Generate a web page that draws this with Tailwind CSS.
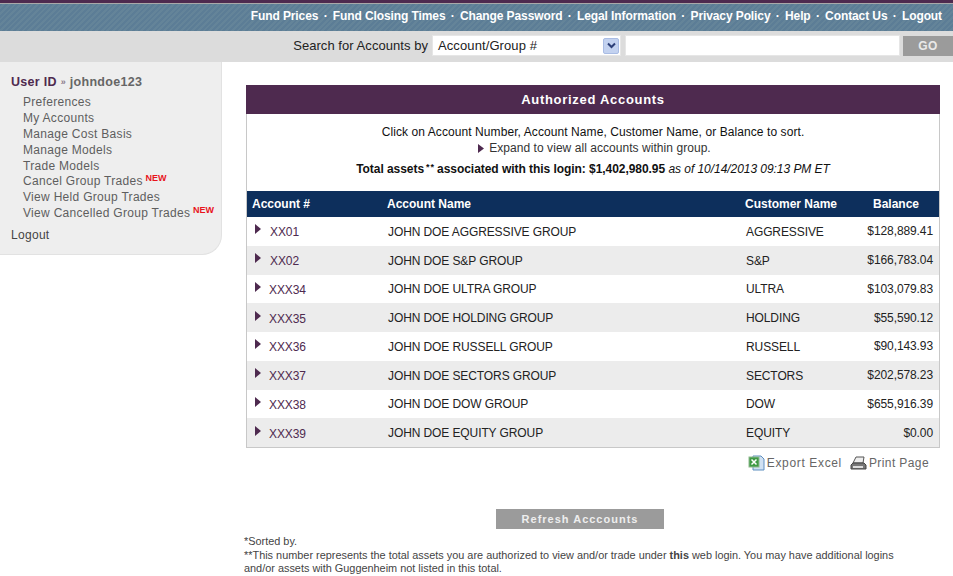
<!DOCTYPE html>
<html lang="en">
  <head>
    <meta charset="UTF-8" />
    <title>Authorized Accounts</title>
    <script src="https://cdn.jsdelivr.net/npm/@tailwindcss/browser@4"></script>
    <meta name="viewport" content="width=device-width, initial-scale=1.0" />
  </head>
  <body class="bg-white h-[576px] overflow-hidden font-['Liberation_Sans',Arial,sans-serif] text-[12px] text-[#222]">
    <!-- top nav -->
    <div class="h-[3px] bg-[#4e2a4f]"></div>
    <div class="h-[28px] pb-[3px] border-t border-[#a9a9a9] bg-[repeating-linear-gradient(135deg,#5c7d96_0,#5c7d96_2px,#648499_2px,#648499_4px)] flex items-center justify-end pr-[11px] font-bold text-white tracking-[-0.1px] gap-[5.3px]">
      <a>Fund Prices</a><span>·</span>
      <a>Fund Closing Times</a><span>·</span>
      <a>Change Password</a><span>·</span>
      <a>Legal Information</a><span>·</span>
      <a>Privacy Policy</a><span>·</span>
      <a>Help</a><span>·</span>
      <a>Contact Us</a><span>·</span>
      <a>Logout</a>
    </div>

    <!-- search bar -->
    <div class="h-[31px] pb-[2px] bg-[#dcdcdc] flex items-center justify-end text-[13px]">
      <span class="mr-[4px] tracking-[0.05px]">Search for Accounts by</span>
      <div class="w-[189px] h-[21px] bg-white flex items-center justify-between pl-[5px] pr-[1px] mr-[4px] border border-[#e6e6e6]">
        <span class="tracking-[0.1px]">Account/Group #</span>
        <span class="w-[16px] h-[16px] bg-[#c3d2f0] border border-[#a9bce4] rounded-[2px] flex items-center justify-center">
          <svg width="9" height="7" viewBox="0 0 9 7"><path d="M1 1.5 L4.5 5 L8 1.5" fill="none" stroke="#2c3f78" stroke-width="2"/></svg>
        </span>
      </div>
      <div class="w-[275px] h-[21px] bg-white border border-[#e6e6e6] mr-[3px]"></div>
      <div class="w-[50px] h-[20px] bg-[#9b9b9b] text-[#e9e9e9] font-bold text-[12px] tracking-[0.5px] flex items-center justify-center">GO</div>
    </div>

    <div class="flex items-start">
      <!-- sidebar -->
      <div class="w-[222px] h-[193px] shrink-0 bg-[#eeeeee] rounded-br-[20px] border-r border-b border-[#e2e2e2] pt-[12px] pl-[11px] text-[#5e5e5e] tracking-[0.3px]">
        <div class="font-bold text-[12.5px] leading-[16px] mb-[4px]"><span class="text-[#4e2a4f]">User ID</span> <span class="text-[9px] text-[#8a7a8a] align-[1px]">»</span> <span class="text-[#666]">johndoe123</span></div>
        <ul class="pl-[12px] leading-[16px]">
          <li>Preferences</li>
          <li>My Accounts</li>
          <li>Manage Cost Basis</li>
          <li>Manage Models</li>
          <li>Trade Models</li>
          <li class="whitespace-nowrap -mt-[1px]">Cancel Group Trades <span class="text-[9px] leading-[0] font-bold text-[#e8141c] align-[4px] tracking-normal -ml-[1px]">NEW</span></li>
          <li>View Held Group Trades</li>
          <li class="whitespace-nowrap">View Cancelled Group Trades <span class="text-[9px] leading-[0] font-bold text-[#e8141c] align-[4px] tracking-normal -ml-[1px]">NEW</span></li>
        </ul>
        <div class="mt-[6px] leading-[16px] text-[#444]">Logout</div>
      </div>

      <!-- main -->
      <div class="w-[731px] pl-[24px] pr-[13px] pt-[23px]">
        <div class="h-[29px] pt-[1px] bg-[#4e2a4f] text-white font-bold text-[13px] tracking-[0.7px] flex items-center justify-center">Authorized Accounts</div>
        <div class="border-x border-b border-[#c8c8c8]">
          <div class="h-[77px] pt-[10px] text-center text-[#111]">
            <p class="leading-[17px] tracking-[0.08px]">Click on Account Number, Account Name, Customer Name, or Balance to sort.</p>
            <p class="leading-[15px] flex items-center justify-center gap-[5px] text-[#333] tracking-[0.05px] pl-[3px]">
              <svg width="6" height="9" viewBox="0 0 6 9"><path d="M0 0 L6 4.5 L0 9 Z" fill="#4e2a4f"/></svg>
              Expand to view all accounts within group.
            </p>
            <p class="leading-[18px] mt-[4px] tracking-[-0.05px]"><b>Total assets<span class="text-[9px] leading-[0] align-[3px] tracking-[1px] mx-[2px]">**</span>associated with this login: $1,402,980.95</b> <i>as of 10/14/2013 09:13 PM ET</i></p>
          </div>
          <table class="w-full table-fixed border-collapse">
            <thead>
              <tr class="h-[26px] bg-[#0d2f5c] text-white font-bold text-left">
                <th class="w-[135px] pl-[5px]">Account #</th>
                <th class="w-[358px] pl-[5px]">Account Name</th>
                <th class="w-[113px] pl-[5px]">Customer Name</th>
                <th class="pl-[20px]">Balance</th>
              </tr>
            </thead>
            <tbody class="text-[#222] tracking-[-0.1px]">
              <tr class="h-[28.75px]">
                <td class="pl-[8px] pt-[2px]"><span class="flex items-center gap-[9px]"><svg class="-mt-[6px]" width="6" height="10" viewBox="0 0 6 10"><path d="M0 0 L6 5 L0 10 Z" fill="#4e2a4f"/></svg><a class="text-[#4e2a4f]">XX01</a></span></td>
                <td class="pl-[6px] pt-[1px]">JOHN DOE AGGRESSIVE GROUP</td>
                <td class="pl-[6px] pt-[1px]">AGGRESSIVE</td>
                <td class="pr-[6px] text-right">$128,889.41</td>
              </tr>
              <tr class="h-[28.75px] bg-[#ececec]">
                <td class="pl-[8px] pt-[2px]"><span class="flex items-center gap-[9px]"><svg class="-mt-[6px]" width="6" height="10" viewBox="0 0 6 10"><path d="M0 0 L6 5 L0 10 Z" fill="#4e2a4f"/></svg><a class="text-[#4e2a4f]">XX02</a></span></td>
                <td class="pl-[6px] pt-[1px]">JOHN DOE S&amp;P GROUP</td>
                <td class="pl-[6px] pt-[1px]">S&amp;P</td>
                <td class="pr-[6px] text-right">$166,783.04</td>
              </tr>
              <tr class="h-[28.75px]">
                <td class="pl-[8px] pt-[2px]"><span class="flex items-center gap-[8px]"><svg class="-mt-[6px]" width="6" height="10" viewBox="0 0 6 10"><path d="M0 0 L6 5 L0 10 Z" fill="#4e2a4f"/></svg><a class="text-[#4e2a4f]">XXX34</a></span></td>
                <td class="pl-[6px]">JOHN DOE ULTRA GROUP</td>
                <td class="pl-[6px] pt-[1px]">ULTRA</td>
                <td class="pr-[6px] text-right">$103,079.83</td>
              </tr>
              <tr class="h-[28.75px] bg-[#ececec]">
                <td class="pl-[8px] pt-[2px]"><span class="flex items-center gap-[8px]"><svg class="-mt-[6px]" width="6" height="10" viewBox="0 0 6 10"><path d="M0 0 L6 5 L0 10 Z" fill="#4e2a4f"/></svg><a class="text-[#4e2a4f]">XXX35</a></span></td>
                <td class="pl-[6px] pt-[1px]">JOHN DOE HOLDING GROUP</td>
                <td class="pl-[6px] pt-[1px]">HOLDING</td>
                <td class="pr-[6px] text-right">$55,590.12</td>
              </tr>
              <tr class="h-[28.75px]">
                <td class="pl-[8px] pt-[2px]"><span class="flex items-center gap-[8px]"><svg class="-mt-[6px]" width="6" height="10" viewBox="0 0 6 10"><path d="M0 0 L6 5 L0 10 Z" fill="#4e2a4f"/></svg><a class="text-[#4e2a4f]">XXX36</a></span></td>
                <td class="pl-[6px] pt-[2px]">JOHN DOE RUSSELL GROUP</td>
                <td class="pl-[6px] pt-[2px]">RUSSELL</td>
                <td class="pr-[6px] text-right">$90,143.93</td>
              </tr>
              <tr class="h-[28.75px] bg-[#ececec]">
                <td class="pl-[8px] pt-[2px]"><span class="flex items-center gap-[8px]"><svg class="-mt-[6px]" width="6" height="10" viewBox="0 0 6 10"><path d="M0 0 L6 5 L0 10 Z" fill="#4e2a4f"/></svg><a class="text-[#4e2a4f]">XXX37</a></span></td>
                <td class="pl-[6px] pt-[1px]">JOHN DOE SECTORS GROUP</td>
                <td class="pl-[6px] pt-[1px]">SECTORS</td>
                <td class="pr-[6px] text-right">$202,578.23</td>
              </tr>
              <tr class="h-[28.75px]">
                <td class="pl-[8px] pt-[2px]"><span class="flex items-center gap-[8px]"><svg class="-mt-[6px]" width="6" height="10" viewBox="0 0 6 10"><path d="M0 0 L6 5 L0 10 Z" fill="#4e2a4f"/></svg><a class="text-[#4e2a4f]">XXX38</a></span></td>
                <td class="pl-[6px] pt-[1px]">JOHN DOE DOW GROUP</td>
                <td class="pl-[6px] pt-[1px]">DOW</td>
                <td class="pr-[6px] text-right">$655,916.39</td>
              </tr>
              <tr class="h-[28.75px] bg-[#ececec]">
                <td class="pl-[8px] pt-[2px]"><span class="flex items-center gap-[8px]"><svg class="-mt-[6px]" width="6" height="10" viewBox="0 0 6 10"><path d="M0 0 L6 5 L0 10 Z" fill="#4e2a4f"/></svg><a class="text-[#4e2a4f]">XXX39</a></span></td>
                <td class="pl-[6px] pt-[1px]">JOHN DOE EQUITY GROUP</td>
                <td class="pl-[6px] pt-[1px]">EQUITY</td>
                <td class="pr-[6px] text-right">$0.00</td>
              </tr>
            </tbody>
          </table>
        </div>

        <!-- export / print -->
        <div class="flex justify-end items-center gap-[8px] pr-[11px] mt-[7px] text-[#666] leading-[16px]">
          <span class="flex items-center gap-[2px] tracking-[0.65px]">
            <svg width="17" height="16" viewBox="0 0 17 16"><path d="M5 1 H13 L16 4 V15 H5 Z" fill="#cfe0f2" stroke="#5f8fc0"/><rect x="1" y="2" width="10" height="10" fill="#3f9a45" stroke="#8fb98f"/><path d="M3.5 4.5 L8.5 9.5 M8.5 4.5 L3.5 9.5" stroke="#fff" stroke-width="1.5"/></svg>
            Export Excel
          </span>
          <span class="flex items-center gap-[2px] tracking-[0.4px]">
            <svg width="17" height="16" viewBox="0 0 17 16"><path d="M6 2 H14 L13 8 H3 Z" fill="#eee" stroke="#555"/><path d="M3 8 H14 L16 10 V14 H1 V10 Z" fill="#777" stroke="#444"/><rect x="3" y="11" width="10" height="2" fill="#ddd"/></svg>
            Print Page
          </span>
        </div>

        <!-- refresh -->
        <div class="w-[168px] h-[20px] ml-[250px] mt-[38px] bg-[#9b9b9b] text-[#eeeeee] font-bold text-[11px] tracking-[1px] flex items-center justify-center">Refresh Acccounts</div>

        <!-- notes -->
        <div class="-ml-[2px] mt-[6px] w-[665px] text-[10.9px] leading-[13.5px] text-[#444]">
          <p>*Sorted by.</p>
          <p>**This number represents the total assets you are authorized to view and/or trade under <b>this</b> web login. You may have additional logins and/or assets with Guggenheim not listed in this total.</p>
        </div>
      </div>
    </div>
  </body>
</html>
